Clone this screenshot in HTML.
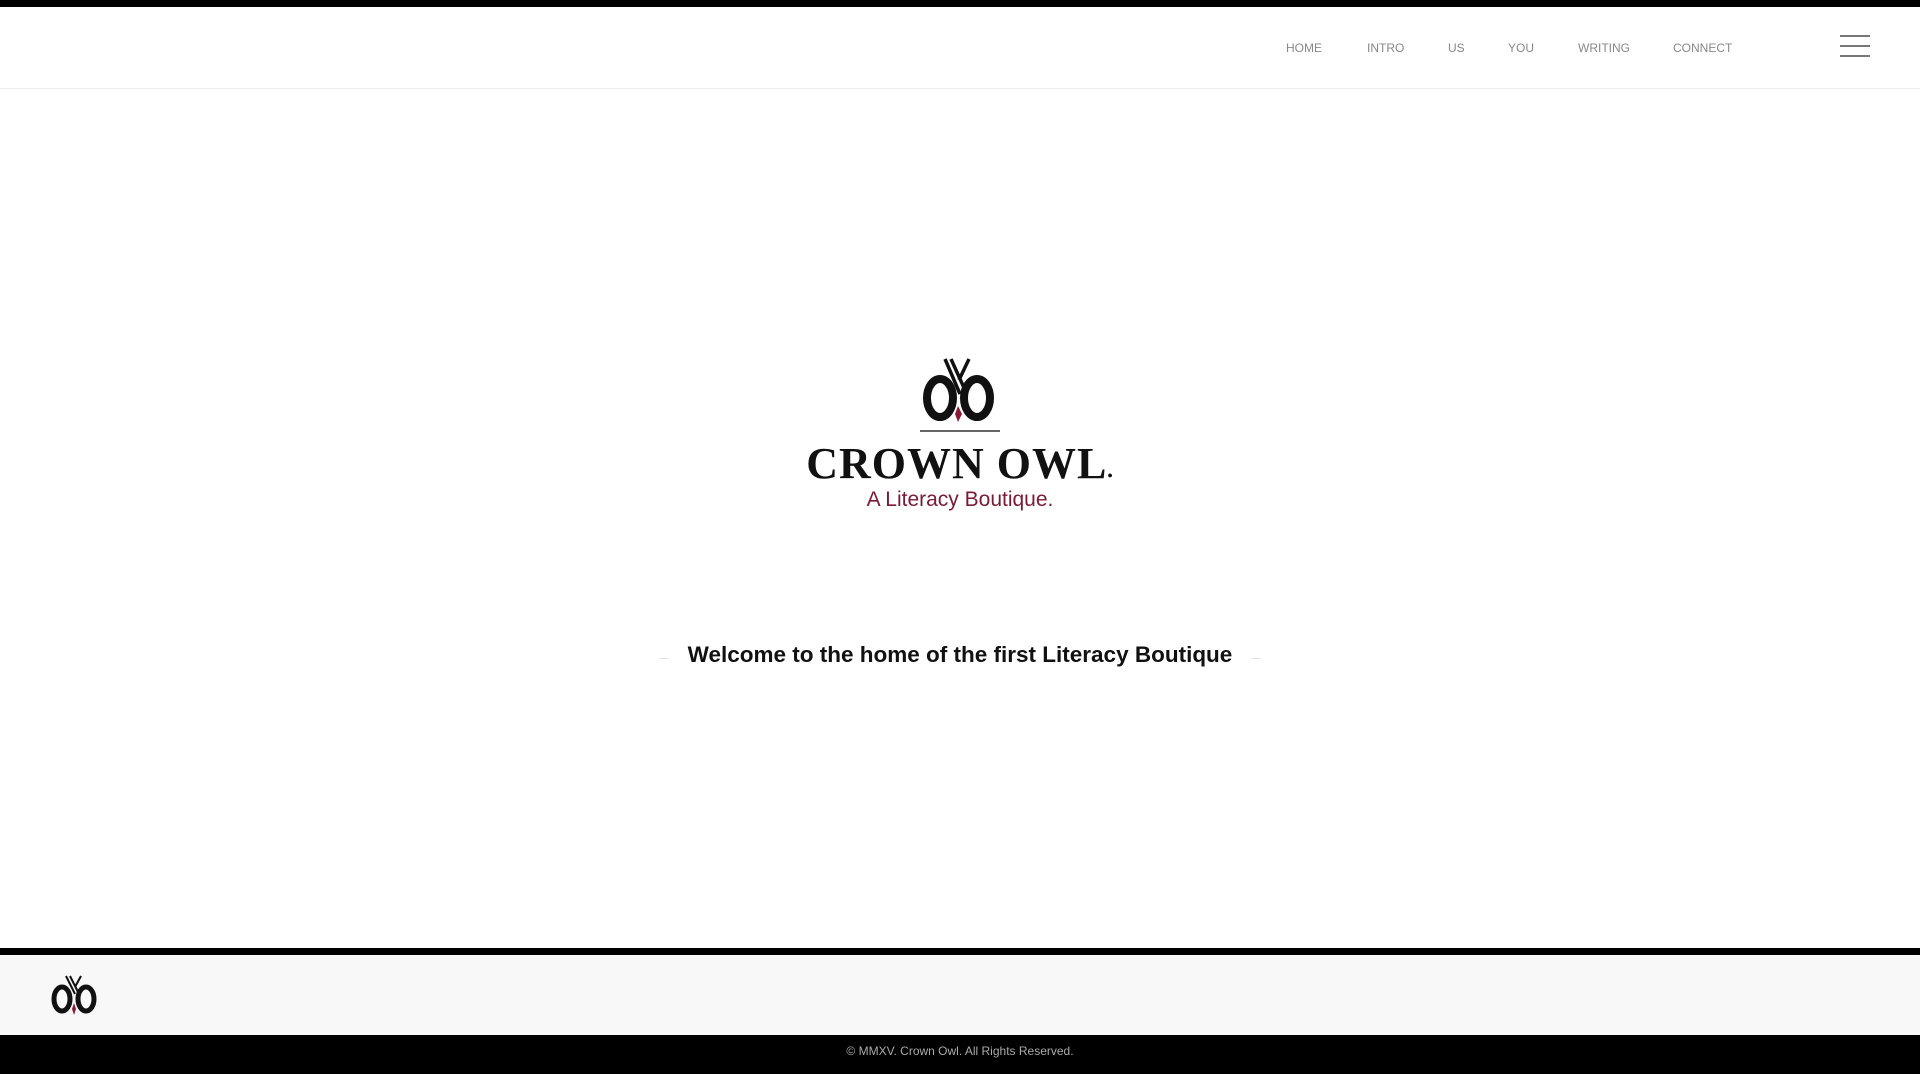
<!DOCTYPE html>
<html><head><meta charset="utf-8"><style>
*{margin:0;padding:0;box-sizing:border-box}
body{width:1920px;height:1074px;background:#fff;position:relative;overflow:hidden;font-family:"Liberation Sans",sans-serif}
.top{position:absolute;left:0;top:0;width:1920px;height:7px;background:#000}
.nav{position:absolute;left:0;top:7px;width:1920px;height:82px;border-bottom:1px solid #eee}
.nav a{position:absolute;top:34px;font-size:12px;color:#888;text-decoration:none;letter-spacing:0}
.hb{position:absolute;left:1840px;width:30px;height:2px;background:#777}
.crown{position:absolute;left:0;width:1920px;text-align:center;top:438px;font-family:"Liberation Serif",serif;font-size:44px;font-weight:bold;letter-spacing:1px;color:#111}
.tag{position:absolute;left:0;width:1920px;text-align:center;top:488px;font-size:21px;color:#7a1a35}
.wel{position:absolute;left:0;width:1920px;text-align:center;top:642px;font-size:22.5px;font-weight:bold;color:#111}
.fb{position:absolute;left:0;top:948px;width:1920px;height:7px;background:#000}
.fl{position:absolute;left:0;top:955px;width:1920px;height:80px;background:#f8f8f8}
.fd{position:absolute;left:0;top:1035px;width:1920px;height:39px;background:#000;color:#aaa;font-size:12px;text-align:center;line-height:32px}
</style></head><body>
<div class="top"></div>
<div class="nav">
<a style="left:1286px">HOME</a><a style="left:1367px">INTRO</a><a style="left:1448px">US</a><a style="left:1508px">YOU</a><a style="left:1578px">WRITING</a><a style="left:1673px">CONNECT</a>
<div class="hb" style="top:28px"></div><div class="hb" style="top:38px"></div><div class="hb" style="top:48px"></div>
</div>
<svg style="position:absolute;left:915px;top:356px" width="90" height="80" viewBox="0 0 90 80">
<path d="M30 3 L45 38 M36 3 L50 34 M54 3 L44 24" stroke="#111" stroke-width="3.5" fill="none"/>
<ellipse cx="25" cy="42" rx="13" ry="19" fill="none" stroke="#111" stroke-width="8"/>
<ellipse cx="62" cy="42" rx="13" ry="19" fill="none" stroke="#111" stroke-width="8"/>
<path d="M43 50 L47 58 L43 66 L40 58Z" fill="#8a1a35"/>
<line x1="5" y1="75" x2="85" y2="75" stroke="#333" stroke-width="1.5"/>
</svg>
<div class="crown">CROWN OWL<span style="font-size:9px">●</span></div>
<div class="tag">A Literacy Boutique.</div>
<div class="wel"><span style="color:#ddd;font-weight:normal;font-size:14px;margin-right:20px">–</span>Welcome to the home of the first Literacy Boutique<span style="color:#ddd;font-weight:normal;font-size:14px;margin-left:20px">–</span></div>
<div class="fb"></div>
<div class="fl"></div>
<svg style="position:absolute;left:48px;top:974px" width="54" height="42" viewBox="0 0 54 42">
<path d="M18 2 L27 20 M22 2 L30 18 M33 2 L27 13" stroke="#111" stroke-width="2" fill="none"/>
<ellipse cx="14" cy="25" rx="8" ry="12" fill="none" stroke="#111" stroke-width="5"/>
<ellipse cx="38" cy="25" rx="8" ry="12" fill="none" stroke="#111" stroke-width="5"/>
<path d="M26 29 L28 35 L26 41 L24 35Z" fill="#8a1a35"/>
</svg>
<div class="fd">© MMXV. Crown Owl. All Rights Reserved.</div>
</body></html>
